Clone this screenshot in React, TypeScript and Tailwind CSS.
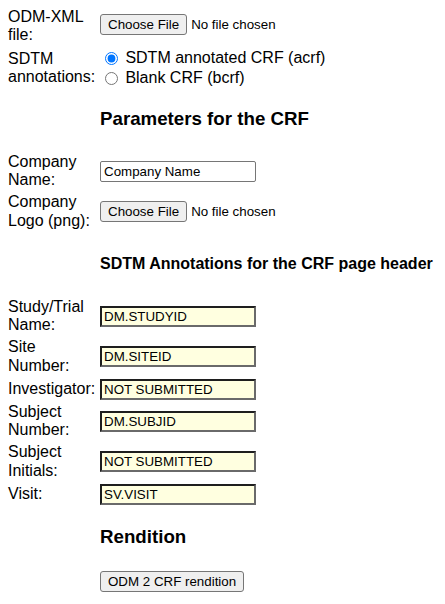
import React from "react";

const labelCls = "w-[90px] leading-[18.4px] text-[16px]";
const btnCls =
  "h-[21px] px-[7px] bg-[#efefef] border border-[#767676] rounded-[3px] text-[13.333px] leading-[15px] text-black";

function FileInput({ up = false }: { up?: boolean }) {
  return (
    <div className={up ? "flex items-center mb-[4px]" : "flex items-center"}>
      <button type="button" className={btnCls}>
        Choose File
      </button>
      <span className="ml-[4px] text-[13.333px] leading-[15px]">No file chosen</span>
    </div>
  );
}

function YellowInput({ value }: { value: string }) {
  return (
    <input
      readOnly
      value={value}
      className="w-[156px] h-[21px] px-[2px] bg-[#ffffe0] border-2 border-t-[#1e1e1e] border-l-[#1e1e1e] border-b-[#6a6a6a] border-r-[#6a6a6a] text-[13.333px] text-black outline-none"
    />
  );
}

function Row({ label, children }: { label: React.ReactNode; children: React.ReactNode }) {
  return (
    <>
      <div className={labelCls}>{label}</div>
      <div className="flex items-center">{children}</div>
    </>
  );
}

export default function App() {
  return (
    <div className="p-2 font-['Liberation_Sans',Arial,sans-serif] text-[16px] text-black bg-white min-h-[604px]">
      <div className="grid grid-cols-[90px_auto] gap-x-[2px] gap-y-[3.5px] items-center justify-start">
        <Row label="ODM-XML file:">
          <FileInput up />
        </Row>
        <Row label="SDTM annotations:">
          <div className="flex flex-col">
            <label className="flex items-center h-[20px]">
              <input type="radio" name="ann" defaultChecked className="ml-[5px] mr-[3px] w-[13px] h-[13px]" />
              <span className="ml-[4.4px] leading-[18.4px]">SDTM annotated CRF (acrf)</span>
            </label>
            <label className="flex items-center h-[20px]">
              <input type="radio" name="ann" className="ml-[5px] mr-[3px] w-[13px] h-[13px]" />
              <span className="ml-[4.4px] leading-[18.4px]">Blank CRF (bcrf)</span>
            </label>
          </div>
        </Row>
      </div>

      <h3 className="ml-[92px] mt-[19.5px] mb-[23.7px] text-[18.72px] leading-[21.5px] font-bold">
        Parameters for the CRF
      </h3>

      <div className="grid grid-cols-[90px_auto] gap-x-[2px] gap-y-[3.3px] items-center justify-start">
        <Row label="Company Name:">
          <input
            readOnly
            value="Company Name"
            className="w-[156px] h-[21px] px-[3px] bg-white border border-[#767676] rounded-[2px] text-[13.333px] text-black outline-none"
          />
        </Row>
        <Row label="Company Logo (png):">
          <FileInput />
        </Row>
      </div>

      <h4 className="ml-[92px] mt-[25.3px] mb-[24.3px] text-[16px] leading-[18.4px] font-bold">
        SDTM Annotations for the CRF page header
      </h4>

      <div className="grid grid-cols-[90px_auto] gap-x-[2px] gap-y-[3.5px] items-center justify-start">
        <Row label="Study/Trial Name:">
          <YellowInput value="DM.STUDYID" />
        </Row>
        <Row label="Site Number:">
          <YellowInput value="DM.SITEID" />
        </Row>
        <Row label="Investigator:">
          <YellowInput value="NOT SUBMITTED" />
        </Row>
        <Row label="Subject Number:">
          <YellowInput value="DM.SUBJID" />
        </Row>
        <Row label="Subject Initials:">
          <YellowInput value="NOT SUBMITTED" />
        </Row>
        <Row label="Visit:">
          <YellowInput value="SV.VISIT" />
        </Row>
      </div>

      <h3 className="ml-[92px] mt-[21.8px] mb-[21.5px] text-[18.72px] leading-[21.5px] font-bold">
        Rendition
      </h3>

      <div className="ml-[92px]">
        <button type="button" className={btnCls}>
          ODM 2 CRF rendition
        </button>
      </div>
    </div>
  );
}
